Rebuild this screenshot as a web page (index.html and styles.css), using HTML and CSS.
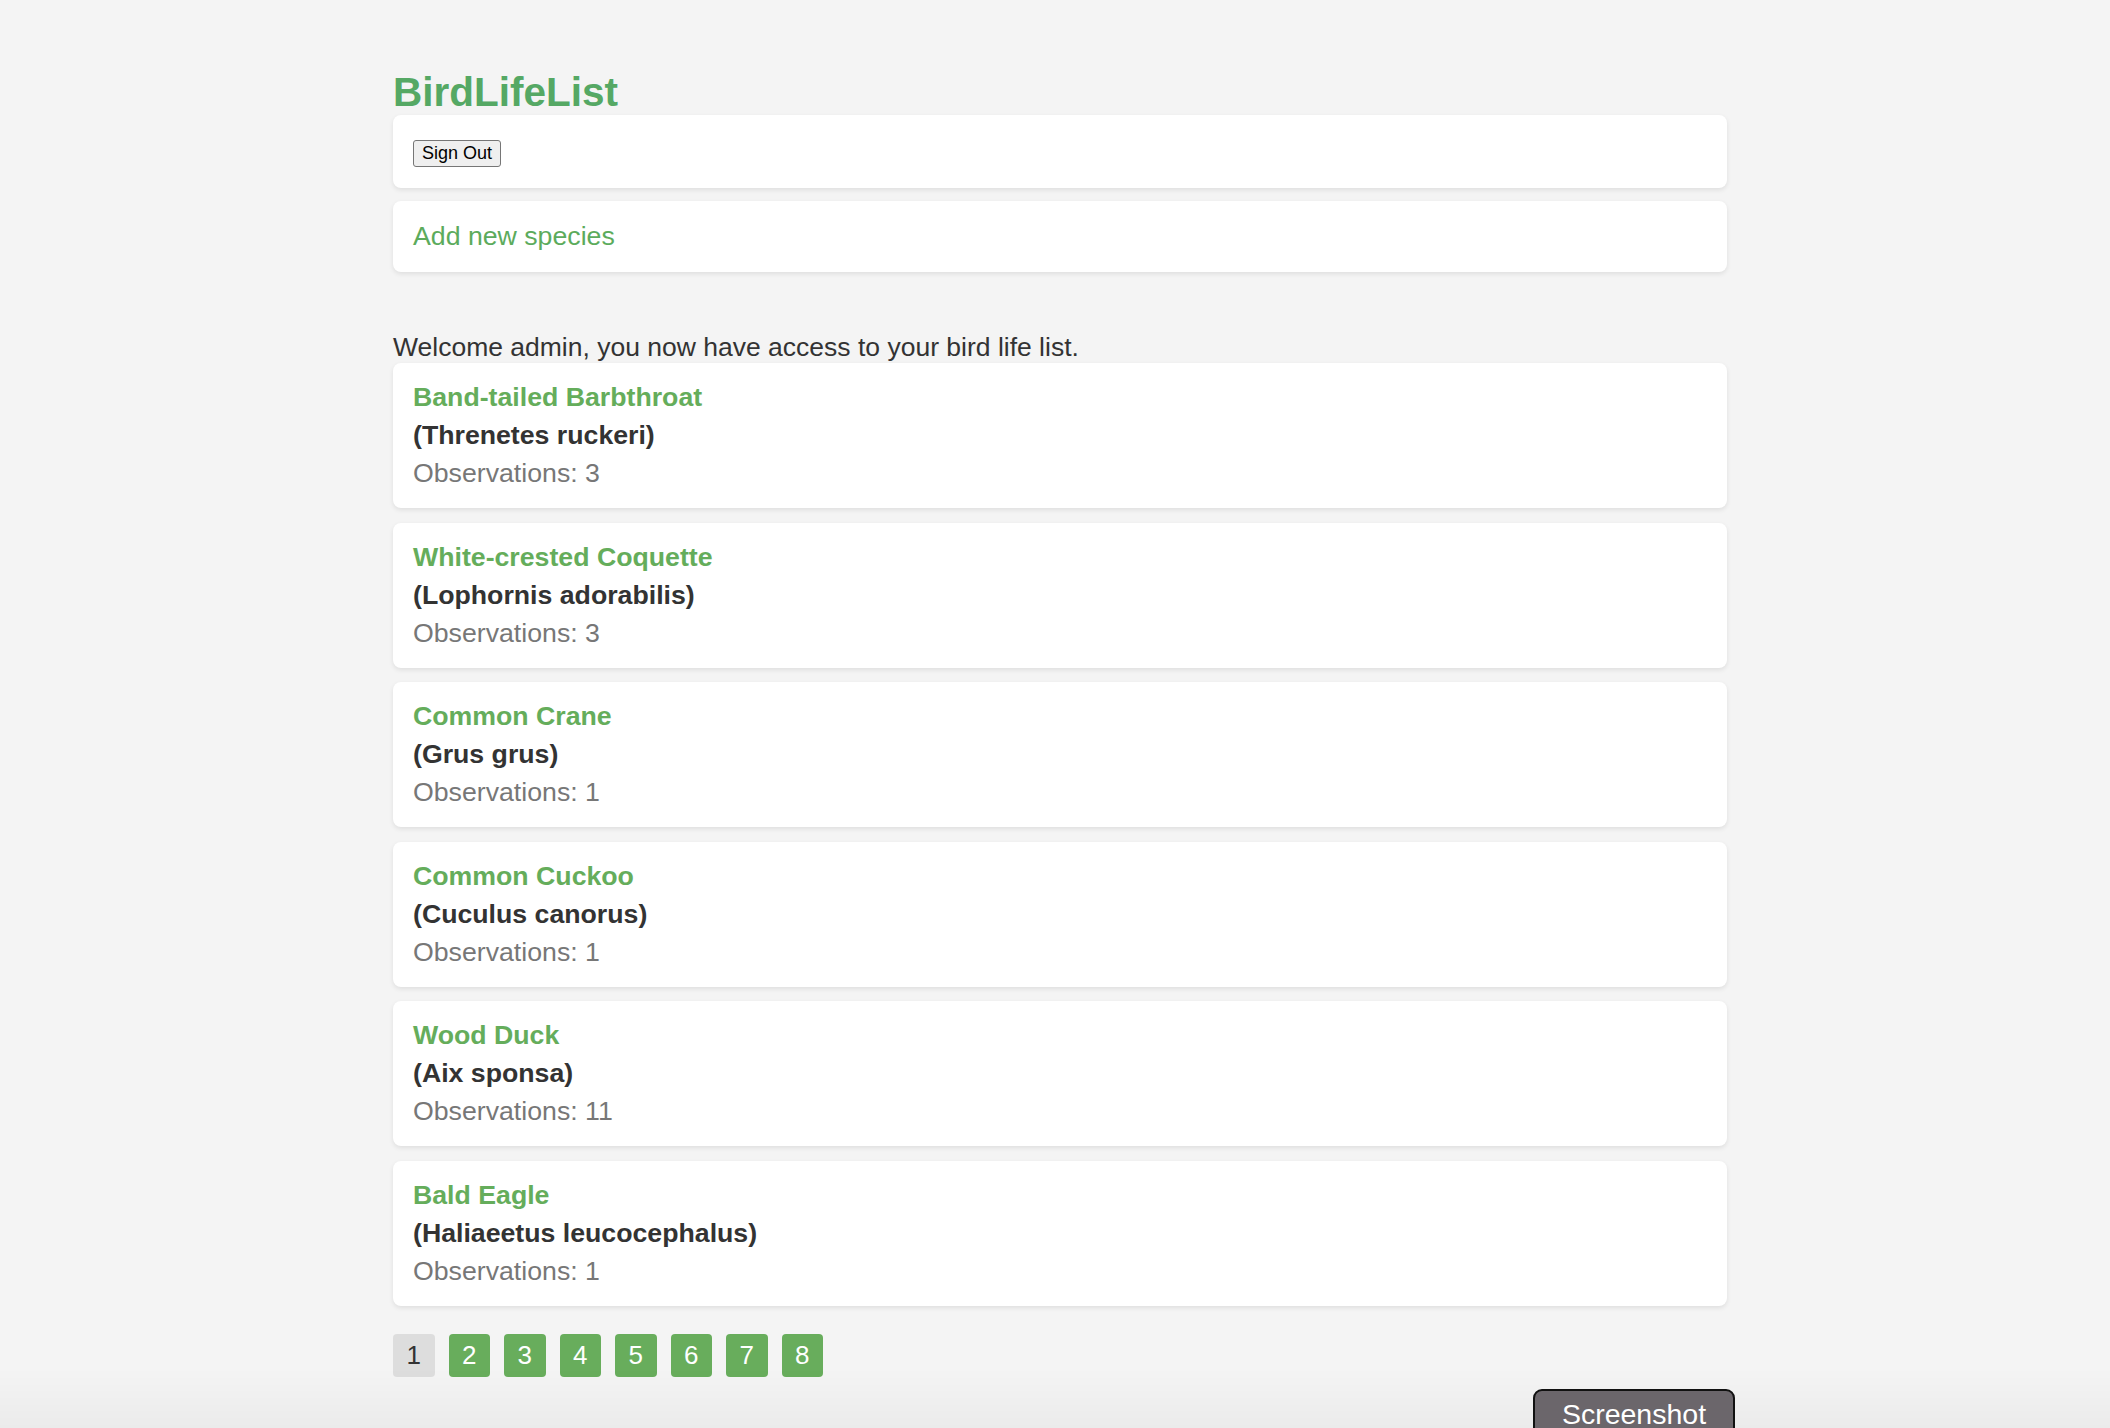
FILE: index.html
```html
<!DOCTYPE html>
<html lang="en">
<head>
<meta charset="utf-8">
<title>BirdLifeList</title>
<link rel="stylesheet" href="styles.css">
</head>
<body>
<div class="page">
  <h1 class="brand">BirdLifeList</h1>
  <div class="card card-signout">
    <button class="btn-signout" type="button">Sign Out</button>
  </div>
  <div class="card card-link">
    <a class="add-link" href="#">Add new species</a>
  </div>
  <p class="welcome">Welcome admin, you now have access to your bird life list.</p>
  <ul class="species-list">
    <li class="card species">
      <a class="species-name" href="#">Band-tailed Barbthroat</a>
      <div class="species-sci">(Threnetes ruckeri)</div>
      <div class="species-obs">Observations: 3</div>
    </li>
    <li class="card species">
      <a class="species-name" href="#">White-crested Coquette</a>
      <div class="species-sci">(Lophornis adorabilis)</div>
      <div class="species-obs">Observations: 3</div>
    </li>
    <li class="card species">
      <a class="species-name" href="#">Common Crane</a>
      <div class="species-sci">(Grus grus)</div>
      <div class="species-obs">Observations: 1</div>
    </li>
    <li class="card species">
      <a class="species-name" href="#">Common Cuckoo</a>
      <div class="species-sci">(Cuculus canorus)</div>
      <div class="species-obs">Observations: 1</div>
    </li>
    <li class="card species">
      <a class="species-name" href="#">Wood Duck</a>
      <div class="species-sci">(Aix sponsa)</div>
      <div class="species-obs">Observations: 11</div>
    </li>
    <li class="card species">
      <a class="species-name" href="#">Bald Eagle</a>
      <div class="species-sci">(Haliaeetus leucocephalus)</div>
      <div class="species-obs">Observations: 1</div>
    </li>
  </ul>
  <nav class="pager">
    <span class="page-btn current">1</span>
    <a class="page-btn" href="#">2</a>
    <a class="page-btn" href="#">3</a>
    <a class="page-btn" href="#">4</a>
    <a class="page-btn" href="#">5</a>
    <a class="page-btn" href="#">6</a>
    <a class="page-btn" href="#">7</a>
    <a class="page-btn" href="#">8</a>
  </nav>
</div>
<div class="bottom-shade"></div>
<button class="screenshot-btn" type="button">Screenshot</button>
</body>
</html>
```

FILE: styles.css
```css
html, body {
  margin: 0;
  padding: 0;
}

body {
  background: #f4f4f4;
  font-family: "Liberation Sans", Arial, Helvetica, sans-serif;
  color: #333;
  padding-left: 10px;
  height: 1428px;
  overflow: hidden;
}

.page {
  width: 1334px;
  margin: 0 auto;
  padding-top: 69px;
}

.brand {
  margin: 0;
  font-size: 40.5px;
  line-height: 46px;
  font-weight: bold;
  color: #55a864;
}

.card {
  background: #fff;
  border-radius: 8px;
  box-shadow: 0 2px 5px rgba(0, 0, 0, 0.09);
}

.card-signout {
  height: 73px;
  box-sizing: border-box;
  padding: 25px 20px 21px;
  margin-bottom: 13px;
}

.btn-signout {
  display: block;
  height: 27px;
  box-sizing: border-box;
  padding: 0 8px;
  font-family: "Liberation Sans", Arial, sans-serif;
  font-size: 18px;
  line-height: 23px;
  color: #000;
  background: #efefef;
  border: 1px solid #767676;
  border-radius: 3px;
}

.card-link {
  height: 71px;
  box-sizing: border-box;
  padding: 15.5px 20px 17.5px;
}

.add-link {
  display: block;
  font-size: 26.7px;
  line-height: 38px;
  color: #5cab5c;
  text-decoration: none;
}

.welcome {
  margin: 60px 0 1px 0;
  font-size: 26.5px;
  line-height: 30px;
  color: #333;
}

.species-list {
  list-style: none;
  margin: 0;
  padding: 0;
}

.species {
  height: 145px;
  box-sizing: border-box;
  padding: 15px 20px 16px;
  margin-bottom: 14.6px;
}

.species-name {
  display: block;
  font-size: 26.7px;
  line-height: 38px;
  font-weight: bold;
  color: #65ad5b;
  text-decoration: none;
}

.species-sci {
  font-size: 26.7px;
  line-height: 38px;
  font-weight: bold;
  color: #333;
}

.species-obs {
  font-size: 26.7px;
  line-height: 38px;
  color: #777;
}

.pager {
  display: flex;
  gap: 14px;
  margin-top: 28px;
}

.page-btn {
  display: flex;
  align-items: center;
  justify-content: center;
  width: 41.5px;
  height: 43px;
  border-radius: 4px;
  background: #68ad5c;
  color: #fff;
  font-size: 26px;
  text-decoration: none;
}

.page-btn.current {
  background: #dddddd;
  color: #333;
}

.bottom-shade {
  position: fixed;
  left: 0;
  right: 0;
  bottom: 0;
  height: 60px;
  background: linear-gradient(to bottom, rgba(0, 0, 0, 0), rgba(0, 0, 0, 0.035));
  pointer-events: none;
}

.screenshot-btn {
  position: fixed;
  left: 1533px;
  top: 1389px;
  width: 202px;
  height: 60px;
  box-sizing: border-box;
  padding: 7px 0 17px 0;
  background: #6b666b;
  color: #fff;
  border: 2px solid #111;
  border-radius: 9px;
  font-family: "Liberation Sans", Arial, sans-serif;
  font-size: 28.5px;
  line-height: 32px;
  text-align: center;
}
```
